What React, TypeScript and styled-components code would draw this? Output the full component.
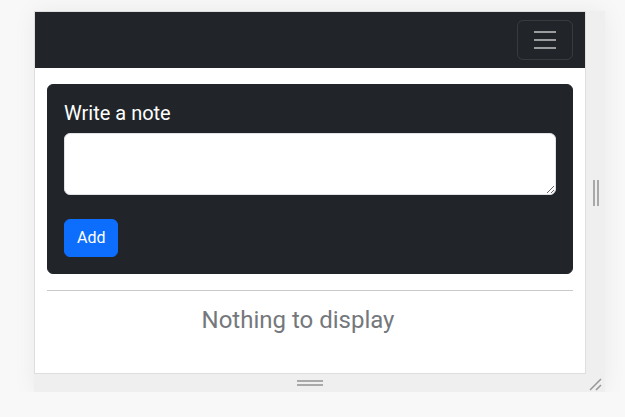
import React from "react";
import styled, { createGlobalStyle } from "styled-components";

const Global = createGlobalStyle`
  html, body { margin: 0; padding: 0; background: #f8f8f8; }
  body { font-family: Roboto, "Noto Sans", "Liberation Sans", sans-serif; }
  * { box-sizing: border-box; }
`;

const Stage = styled.div`
  padding: 11px 0 0 34px;
`;

const Frame = styled.div`
  display: grid;
  grid-template-columns: 552px 19px;
  grid-template-rows: 363px 18px;
  width: 571px;
  background: #efefef;
  box-shadow: 0 0 22px rgba(0, 0, 0, 0.06);
`;

const Panel = styled.div`
  background: #fff;
  border: 1px solid #dedede;
  display: flex;
  flex-direction: column;
  overflow: hidden;
`;

const Navbar = styled.nav`
  height: 56px;
  background: #212529;
  padding: 8px 12px;
  display: flex;
  justify-content: flex-end;
  align-items: center;
`;

const Toggler = styled.button`
  width: 56px;
  height: 40px;
  padding: 4px 12px;
  border: 1px solid rgba(255, 255, 255, 0.1);
  border-radius: 6px;
  background: transparent;
  display: flex;
  align-items: center;
  justify-content: center;
`;

const Main = styled.main`
  padding: 16px 12px;
`;

const Card = styled.form`
  background: #212529;
  border: 1px solid #212529;
  border-radius: 6px;
  padding: 16px;
  color: #fff;
  display: flex;
  flex-direction: column;
  align-items: flex-start;
`;

const Label = styled.label`
  font-size: 20px;
  line-height: 24px;
  margin-bottom: 8px;
  color: #fff;
`;

const TextArea = styled.textarea`
  width: 100%;
  height: 62px;
  border: 1px solid #dee2e6;
  border-radius: 6px;
  background: #fff;
  padding: 6px 12px;
  font: 16px/24px Roboto, sans-serif;
  resize: vertical;
  margin: 0 0 24px;
  display: block;
`;

const Button = styled.button<{ $tone?: string }>`
  height: 38px;
  padding: 6px 12px;
  font: 16px/24px Roboto, sans-serif;
  color: #fff;
  background: ${(p) => p.$tone ?? "#0d6efd"};
  border: 1px solid ${(p) => p.$tone ?? "#0d6efd"};
  border-radius: 6px;
`;

const Rule = styled.hr`
  margin: 16px 0 0;
  border: 0;
  border-top: 1px solid #c8c9ca;
`;

const Empty = styled.p`
  margin: 15px 0 0;
  padding-right: 24px;
  text-align: center;
  font-size: 24px;
  line-height: 1.2;
  color: #74787c;
`;

const Handle = styled.div<{ $dir: "v" | "h" }>`
  display: flex;
  align-items: center;
  justify-content: center;
  flex-direction: ${(p) => (p.$dir === "v" ? "row" : "column")};
  gap: 2px;
  &::before, &::after {
    content: "";
    background: #a9a9a9;
    width: ${(p) => (p.$dir === "v" ? "2px" : "26px")};
    height: ${(p) => (p.$dir === "v" ? "26px" : "2px")};
  }
`;

const Corner = styled.div`
  display: flex;
  align-items: flex-start;
  justify-content: flex-start;
`;

export default function App() {
  return (
    <>
      <Global />
      <Stage>
        <Frame>
          <Panel>
            <Navbar>
              <Toggler type="button" aria-label="Toggle navigation">
                <svg width="30" height="30" viewBox="0 0 30 30">
                  <path
                    d="M4 7h22M4 15h22M4 23h22"
                    stroke="rgba(255,255,255,0.55)"
                    strokeWidth="2"
                    strokeLinecap="butt"
                  />
                </svg>
              </Toggler>
            </Navbar>
            <Main>
              <Card onSubmit={(e) => e.preventDefault()}>
                <Label htmlFor="note">Write a note</Label>
                <TextArea id="note" rows={2} />
                <Button type="submit">Add</Button>
              </Card>
              <Rule />
              <Empty>Nothing to display</Empty>
            </Main>
          </Panel>
          <Handle $dir="v" />
          <Handle $dir="h" />
          <Corner>
            <svg width="19" height="18" viewBox="0 0 19 18">
              <path d="M4 16L15 5M10 16L15 11" stroke="#9a9a9a" strokeWidth="1.6" />
            </svg>
          </Corner>
        </Frame>
      </Stage>
    </>
  );
}
